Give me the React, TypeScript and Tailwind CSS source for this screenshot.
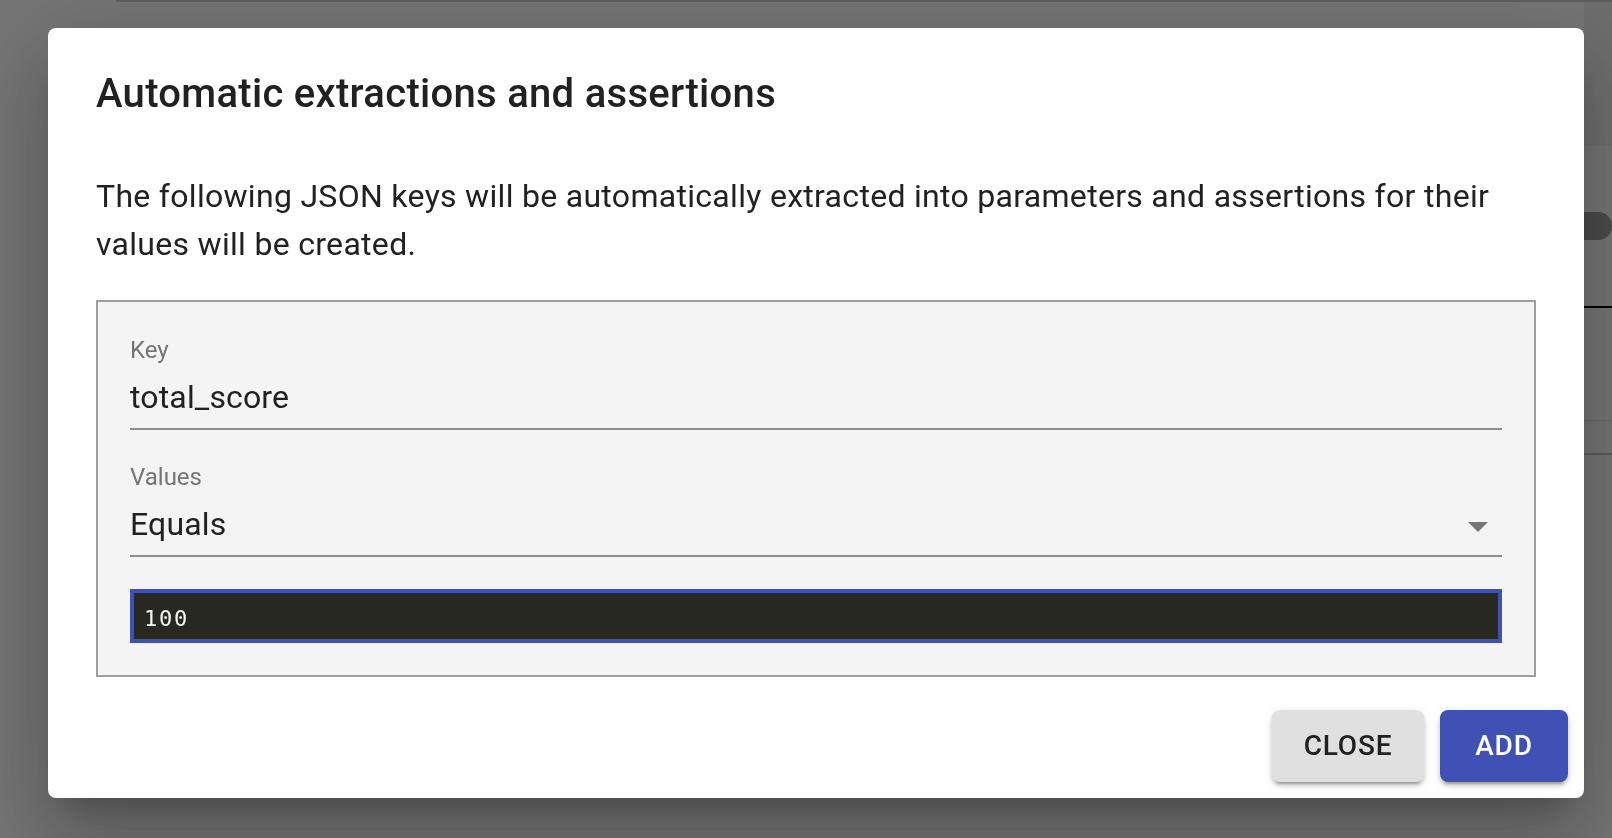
import React from 'react';

const font = { fontFamily: 'Roboto, "Noto Sans", Arial, sans-serif' };

const Field: React.FC<{ label: string; value: string; select?: boolean; className?: string }> = ({
  label,
  value,
  select,
  className = '',
}) => (
  <div className={className}>
    <div className="h-[24px] text-[24px] leading-[24px] text-[#757575]">{label}</div>
    <div className="relative mt-[4px] border-b-2 border-[#8f8f8f] pt-[12px] pb-[12px]">
      <div className="text-[32px] leading-[38px] tracking-[0.15px] text-[#212121]">{value}</div>
      {select && (
        <svg className="absolute right-0 top-[9px] h-[48px] w-[48px]" viewBox="0 0 24 24" fill="#757575">
          <path d="M7 10l5 5 5-5z" />
        </svg>
      )}
    </div>
  </div>
);

export default function App() {
  return (
    <div className="relative h-[838px] w-[1612px] overflow-hidden bg-white" style={font}>
      {/* page behind the backdrop, only its right edge shows */}
      <div className="pl-[116px]">
        <div className="h-[2px] bg-[#cfcfcf]" />
      </div>
      <div className="ml-auto w-[400px]">
        <div className="ml-auto h-[144px] w-[28px] bg-[#f0f0f0]" />
        <div className="flex justify-end pt-[66px]">
          <div className="h-[28px] w-[320px] rounded-full bg-[#a2a2a2]" />
        </div>
        <div className="mt-[66px] h-[2px] bg-black" />
        <div className="mt-[112px] h-px bg-[#e2e2e2]" />
        <div className="mt-[32px] h-[2px] bg-[#c4c4c4]" />
      </div>

      {/* backdrop + dialog */}
      <div className="fixed inset-0 flex items-start bg-black/[0.545] pl-[48px] pt-[28px]">
        <div className="flex h-[770px] w-[1536px] flex-col rounded-[8px] bg-white shadow-[0_22px_30px_-14px_rgba(0,0,0,0.2),0_48px_76px_6px_rgba(0,0,0,0.14),0_18px_92px_16px_rgba(0,0,0,0.12)]">
          <div className="px-[48px] pt-[34px] pb-[30px]">
            <h2 className="text-[40px] font-medium leading-[64px] tracking-[0.3px] text-[#212121]">
              Automatic extractions and assertions
            </h2>
          </div>

          <div className="px-[48px] pt-[16px] pb-[16px]">
            <p className="text-[32px] leading-[48px] tracking-[0.3px] text-[#212121]">
              The following JSON keys will be automatically extracted into parameters and assertions for their values
              will be created.
            </p>

            <div className="mt-[32px] border-2 border-[#9e9e9e] bg-[#f4f4f4] px-[32px] pt-[36px] pb-[32px]">
              <Field label="Key" value="total_score" />
              <Field label="Values" value="Equals" select className="mt-[35px]" />
              <div className="mt-[32px] flex h-[54px] items-center border-4 border-[#3f51b5] bg-[#272822] pl-[10px] pt-[4px]">
                <span
                  className="text-[22px] tracking-[1.8px] text-[#f8f8f2]"
                  style={{ fontFamily: '"DejaVu Sans Mono", "Liberation Mono", monospace' }}
                >
                  100
                </span>
              </div>
            </div>
          </div>

          <div className="flex justify-end gap-[16px] px-[16px] pt-[17px] pb-[15px]">
            <button className="h-[72px] w-[152px] rounded-[8px] bg-[#e0e0e0] text-[28px] font-medium uppercase tracking-[0.8px] text-[#212121] shadow-[0_6px_2px_-4px_rgba(0,0,0,0.2),0_4px_4px_0_rgba(0,0,0,0.14),0_2px_10px_0_rgba(0,0,0,0.12)]">
              Close
            </button>
            <button className="h-[72px] w-[128px] rounded-[8px] bg-[#3f51b5] text-[28px] font-medium uppercase tracking-[0.8px] text-white shadow-[0_6px_2px_-4px_rgba(0,0,0,0.2),0_4px_4px_0_rgba(0,0,0,0.14),0_2px_10px_0_rgba(0,0,0,0.12)]">
              Add
            </button>
          </div>
        </div>
      </div>
    </div>
  );
}
